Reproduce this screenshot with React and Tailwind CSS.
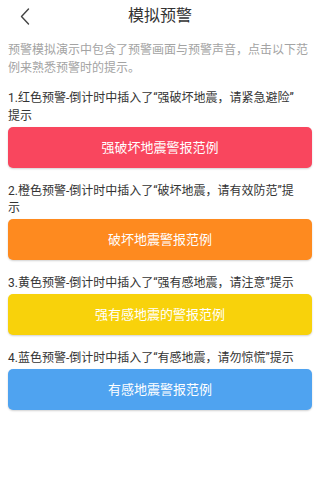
import React from "react";

const font = { fontFamily: 'Roboto, "Noto Sans CJK SC", sans-serif' };

function Item({ children, button, color, first }) {
  return (
    <div className={first ? "mt-[12px]" : "mt-[15px]"}>
      <p className={`text-[12px] text-[#333333] ${first ? "leading-[18px]" : "leading-[17px]"}`}>{children}</p>
      <button
        className={`mt-[2px] flex h-[41px] w-full items-center justify-center rounded-[5px] text-[13px] text-white shadow-[0_1px_2px_rgba(0,0,0,0.18)] ${color}`}
      >
        {button}
      </button>
    </div>
  );
}

export default function App() {
  return (
    <div className="min-h-[478px] w-[320px] bg-white" style={font}>
      <div className="grid h-[32px] grid-cols-[48px_1fr_48px] items-center">
        <div className="flex items-center pl-[20px]">
          <svg width="10" height="17" viewBox="0 0 10 17" fill="none">
            <path d="M8.5 1 L1.5 8.5 L8.5 16" stroke="#444" strokeWidth="1.4" strokeLinecap="round" strokeLinejoin="round" />
          </svg>
        </div>
        <div className="text-center text-[16px] text-[#333333]">模拟预警</div>
        <div />
      </div>
      <div className="px-[8px]">
        <p className="mt-[9px] text-[12px] leading-[18px] text-[#a3a3a3]">
          预警模拟演示中包含了预警画面与预警声音，点击以下范例来熟悉预警时的提示。
        </p>
        <Item first button="强破坏地震警报范例" color="bg-[#f9465e]">
          1.红色预警-倒计时中插入了“强破坏地震，请紧急避险”<br />提示
        </Item>
        <Item button="破坏地震警报范例" color="bg-[#fe8a1f]">
          2.橙色预警-倒计时中插入了“破坏地震，请有效防范”提<br />示
        </Item>
        <Item button="强有感地震的警报范例" color="bg-[#f8d20b]">
          3.黄色预警-倒计时中插入了“强有感地震，请注意”提示
        </Item>
        <Item button="有感地震警报范例" color="bg-[#4fa3f0]">
          4.蓝色预警-倒计时中插入了“有感地震，请勿惊慌”提示
        </Item>
      </div>
    </div>
  );
}
